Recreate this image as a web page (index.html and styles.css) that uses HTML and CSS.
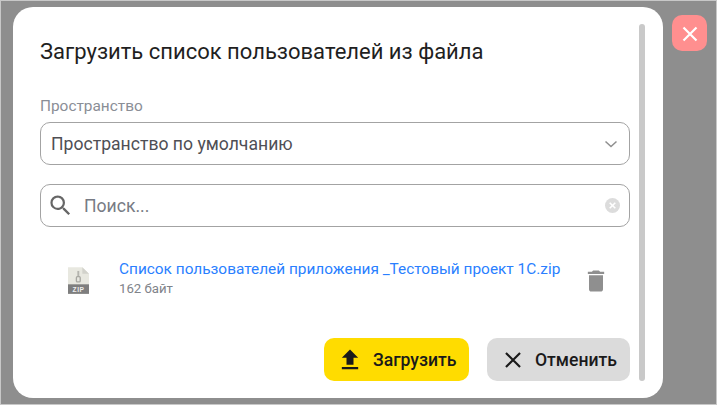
FILE: index.html
```html
<!DOCTYPE html>
<html lang="ru">
<head>
<meta charset="utf-8">
<title>Загрузить список пользователей из файла</title>
<link rel="stylesheet" href="styles.css">
</head>
<body>
<div class="overlay">
  <div class="modal">
    <div class="content">
      <h1 class="title">Загрузить список пользователей из файла</h1>
      <div class="label">Пространство</div>
      <div class="field select">
        <span class="select-value">Пространство по умолчанию</span>
        <svg class="chevron" width="14" height="8" viewBox="0 0 14 8"><path d="M1.500 1.500 7 6.500l5.500-5" fill="none" stroke="#8f8f8f" stroke-width="1.500"/></svg>
      </div>
      <div class="field search">
        <svg class="search-icon" width="27" height="27" viewBox="0 0 24 24"><path fill="#666" d="M15.500 14h-.79l-.28-.27A6.470 6.470 0 0 0 16 9.500 6.500 6.500 0 1 0 9.500 16c1.610 0 3.090-.59 4.230-1.570l.27.28v.79l5 4.990L20.490 19l-4.990-5zm-6 0C7.010 14 5 11.990 5 9.500S7.010 5 9.500 5 14 7.010 14 9.500 11.990 14 9.500 14z"/></svg>
        <span class="placeholder">Поиск...</span>
        <svg class="clear" width="15" height="15" viewBox="0 0 15 15"><circle cx="7.500" cy="7.500" r="7.500" fill="#dcdcdc"/><path d="M4.700 4.700l5.600 5.600M10.300 4.700l-5.600 5.600" stroke="#fff" stroke-width="1.600"/></svg>
      </div>
      <div class="file">
        <svg class="zip" width="21" height="27" viewBox="0 0 22 28">
          <path d="M0 0h15l7 7v21H0z" fill="#e8e8e0"/>
          <path d="M15 0l7 7h-7z" fill="#d2d2cb"/>
          <rect y="18" width="22" height="10" fill="#7e7e7e"/>
          <rect x="9.800" y="4" width="2" height="6" fill="#b4b4ae"/>
          <rect x="8.800" y="10" width="4" height="5.500" rx="1" fill="none" stroke="#a8a8a2" stroke-width="1.400"/>
          <text x="11" y="26" class="zip-text" text-anchor="middle">ZIP</text>
        </svg>
        <div class="file-info">
          <a class="file-name">Список пользователей приложения _Тестовый проект 1С.zip</a>
          <div class="file-size">162 байт</div>
        </div>
        <svg class="trash" width="28" height="28" viewBox="0 0 24 24"><path fill="#8f8f8f" d="M6 19c0 1.100.9 2 2 2h8c1.100 0 2-.9 2-2V7H6v12zM19 4h-3.500l-1-1h-5l-1 1H5v2h14V4z"/></svg>
      </div>
      <div class="actions">
        <button class="btn btn-primary">
          <svg width="28" height="28" viewBox="0 0 24 24"><path fill="#1a1a1a" d="M9 16h6v-6h4l-7-7-7 7h4zM5 18h14v2H5z"/></svg>
          <span>Загрузить</span>
        </button>
        <button class="btn btn-secondary">
          <svg width="26" height="26" viewBox="0 0 24 24"><path fill="none" stroke="#1a1a1a" stroke-width="2" d="M5.500 5.500l13 13M18.500 5.500l-13 13"/></svg>
          <span>Отменить</span>
        </button>
      </div>
    </div>
    <div class="scrollbar"></div>
  </div>
  <button class="close">
    <svg width="20" height="20" viewBox="0 0 20 20"><path d="M3.500 3.500l13 13M16.500 3.500l-13 13" stroke="#fff" stroke-width="2.200" fill="none"/></svg>
  </button>
</div>
</body>
</html>
```
FILE: styles.css
```css
* { box-sizing: border-box; }
html, body { margin: 0; height: 100%; }
body { font-family: Roboto, "Liberation Sans", sans-serif; background: #c8c8c8; padding: 1px; overflow: hidden; }
.overlay { display: flex; align-items: flex-start; gap: 9px; height: 403px; padding: 6px 0 0 12px; background: #8e8e8e; }
.modal { display: flex; width: 650px; height: 391px; background: #fff; border-radius: 20px; padding: 17px 18px 17px 27px; gap: 9px; }
.content { width: 590px; flex: none; }
.scrollbar { width: 6px; height: 357px; background: #c9c9c9; border-radius: 3px; }
.title { margin: 0; font-size: 22px; font-weight: 400; line-height: 26px; color: #1f1f1f; padding-top: 15px; height: 41px; }
.label { margin-top: 32px; font-size: 15.400px; line-height: 18px; color: #8a8e96; height: 18px; }
.field { display: flex; align-items: center; height: 43px; border: 1px solid #a3a3a3; border-radius: 10px; margin-top: 7px; }
.select { padding: 0 11px 0 10px; justify-content: space-between; }
.select-value { font-size: 17.600px; color: #4f4f55; }
.search { margin-top: 19px; padding: 0 9px 0 6px; }
.placeholder { flex: 1; margin-left: 10px; font-size: 17.600px; color: #777b84; }
.file { display: flex; align-items: center; height: 50px; margin-top: 28px; }
.zip { flex: none; margin: 0 30px 0 28px; }
.zip-text { font-family: "Liberation Sans", sans-serif; font-size: 7px; font-weight: 700; fill: #eee; letter-spacing: 0.500px; }
.file-info { flex: 1; margin-top: -3px; }
.file-name { display: block; font-size: 15.400px; line-height: 18px; color: #2a7fff; }
.file-size { font-size: 13.200px; line-height: 16px; margin-top: 3px; color: #80838a; }
.trash { flex: none; margin: 2px 20px 0 0; }
.actions { display: flex; justify-content: flex-end; gap: 18px; margin-top: 33px; }
.btn { display: flex; align-items: center; height: 43px; border: 0; border-radius: 10px; font: 500 17.600px Roboto, "Liberation Sans", sans-serif; color: #1a1a1a; gap: 9px; }
.btn-primary { width: 145px; background: #ffdc00; padding: 0 0 0 12px; }
.btn-secondary { width: 143px; background: #dbdbdb; padding: 0 0 0 13px; }
.close { display: flex; align-items: center; justify-content: center; width: 35px; height: 36px; margin-top: 8px; padding: 2px 0 0; border: 0; border-radius: 10px; background: #ff8f8f; }
```
